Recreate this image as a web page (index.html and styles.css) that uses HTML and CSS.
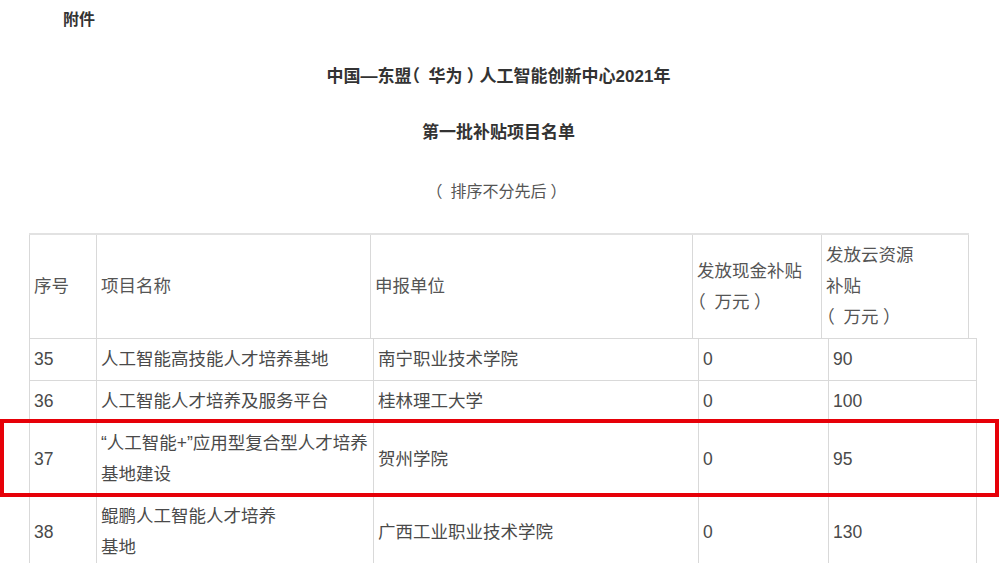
FILE: index.html
```html
<!DOCTYPE html>
<html lang="zh-CN">
<head>
<meta charset="utf-8">
<title>附件</title>
<link rel="stylesheet" href="styles.css">
</head>
<body>
<div class="page">
  <p class="attach">附件</p>
  <p class="title t1">中国—东盟<span class="fw o">（</span>华为<span class="fw c">）</span>人工智能创新中心2021年</p>
  <p class="title t2">第一批补贴项目名单</p>
  <p class="sub"><span class="fw o">（</span>排序不分先后<span class="fw c">）</span></p>

  <table class="grid head">
    <colgroup>
      <col class="h1"><col class="h2"><col class="h3"><col class="h4"><col class="h5">
    </colgroup>
    <tr>
      <td>序号</td>
      <td>项目名称</td>
      <td>申报单位</td>
      <td>发放现金补贴<br><span class="fw o">（</span>万元<span class="fw c">）</span></td>
      <td>发放云资源<br>补贴<br><span class="fw o">（</span>万元<span class="fw c">）</span></td>
    </tr>
  </table>

  <table class="grid body">
    <colgroup>
      <col class="b1"><col class="b2"><col class="b3"><col class="b4"><col class="b5">
    </colgroup>
    <tr>
      <td>35</td>
      <td>人工智能高技能人才培养基地</td>
      <td>南宁职业技术学院</td>
      <td>0</td>
      <td>90</td>
    </tr>
    <tr>
      <td>36</td>
      <td>人工智能人才培养及服务平台</td>
      <td>桂林理工大学</td>
      <td>0</td>
      <td>100</td>
    </tr>
    <tr>
      <td>37</td>
      <td>“人工智能+”应用型复合型人才培养<br>基地建设</td>
      <td>贺州学院</td>
      <td>0</td>
      <td>95</td>
    </tr>
    <tr>
      <td>38</td>
      <td>鲲鹏人工智能人才培养<br>基地</td>
      <td>广西工业职业技术学院</td>
      <td>0</td>
      <td>130</td>
    </tr>
  </table>

  <div class="mark"></div>
</div>
</body>
</html>
```

FILE: styles.css
```css
html, body {
  margin: 0;
  padding: 0;
  background: #fff;
  overflow: hidden;
}

body {
  font-family: "Liberation Sans", "Noto Sans CJK SC", sans-serif;
  color: #555;
}

.fw {
  display: inline-block;
  width: 1em;
  font-feature-settings: "halt" 1;
}

.fw.o { text-align: left; }
.fw.c { text-align: center; }

.page {
  position: relative;
  width: 947px;
  padding: 8px 0 0 29px;
}

.page p {
  margin: 0;
  line-height: 24px;
}

.attach {
  font-size: 16px;
  font-weight: bold;
  color: #333;
  padding-left: 34px;
}

.title {
  font-size: 17px;
  font-weight: bold;
  color: #333;
  text-align: center;
  width: 939px;
}

.t1 { margin-top: 33px !important; }
.t2 { margin-top: 32px !important; }

.sub {
  font-size: 16px;
  color: #555;
  text-align: center;
  width: 939px;
  margin-top: 35px !important;
}

.grid {
  border-collapse: collapse;
  table-layout: fixed;
  font-size: 17.5px;
  line-height: 31px;
  color: #555;
}

.grid td {
  border: 1px solid #d9d9d9;
  padding: 5px 4px;
  vertical-align: middle;
  white-space: nowrap;
}

.head {
  margin-top: 29px;
  width: 939px;
}

.head tr td {
  border-top: 2px solid #e2e2e2;
  border-bottom: 1px solid #dcdcdc;
}

.h1 { width: 67px; }
.h2 { width: 274px; }
.h3 { width: 322px; }
.h4 { width: 129px; }
.h5 { width: 147px; }

.body {
  width: 947px;
  margin-top: -1px;
  color: #4a4a4a;
}

.b1 { width: 67px; }
.b2 { width: 277px; }
.b3 { width: 325px; }
.b4 { width: 130px; }
.b5 { width: 148px; }

.mark {
  position: absolute;
  left: 0;
  top: 419px;
  width: 999px;
  height: 78px;
  box-sizing: border-box;
  border: 4px solid #e60008;
}
```
